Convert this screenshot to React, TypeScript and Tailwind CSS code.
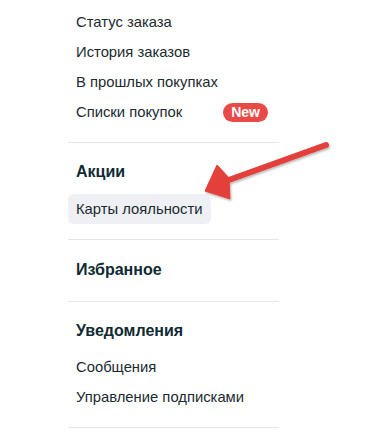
const font = { fontFamily: '"Liberation Sans", Arial, sans-serif' }

function Item({ label, active, badge }: { label: string; active?: boolean; badge?: string }) {
  return (
    <div
      className={`flex items-center h-[30px] px-2 rounded-md text-[14.8px] text-[#1b2a31] ${active ? "bg-[#eef0f3] w-fit" : ""}`}
    >
      <span>{label}</span>
      {badge && (
        <span className="ml-auto mr-[3px] h-[19px] px-[8px] rounded-full bg-[#ea4a47] text-white font-bold text-[14px] leading-[19px]">
          {badge}
        </span>
      )}
    </div>
  )
}

function Heading({ children }: { children: string }) {
  return <div className="flex items-center h-[30px] px-2 text-[16px] font-bold text-[#0f2a33]">{children}</div>
}

export default function App() {
  return (
    <div className="relative w-[366px] h-[432px] bg-white overflow-hidden" style={font}>
      <div className="w-[279px] pl-[68px]">
        <div className="pt-[7px] pb-[15px] border-b border-[#e6e6e6]">
          <Item label="Статус заказа" />
          <Item label="История заказов" />
          <Item label="В прошлых покупках" />
          <Item label="Списки покупок" badge="New" />
        </div>

        <div className="pt-[14px] pb-[15px] border-b border-[#e6e6e6]">
          <Heading>Акции</Heading>
          <div className="mt-[7px]">
            <Item label="Карты лояльности" active />
          </div>
        </div>

        <div className="pt-[15px] pb-[16px] border-b border-[#e6e6e6]">
          <Heading>Избранное</Heading>
        </div>

        <div className="pt-[14px] pb-[15px] border-b border-[#e6e6e6]">
          <Heading>Уведомления</Heading>
          <div className="mt-[6px]">
            <Item label="Сообщения" />
            <Item label="Управление подписками" />
          </div>
        </div>
      </div>

      {/* annotation arrow */}
      <svg className="absolute left-0 top-0 pointer-events-none" width="366" height="432">
        <defs>
          <filter id="sh" x="-20%" y="-20%" width="140%" height="140%">
            <feDropShadow dx="1" dy="1.5" stdDeviation="1.2" floodColor="#000" floodOpacity="0.3" />
          </filter>
        </defs>
        <g filter="url(#sh)" fill="#e3403a" stroke="#e3403a">
          <line x1="226" y1="181" x2="326" y2="145" strokeWidth="6" strokeLinecap="round" />
          <polygon points="205,191 217,165 229,178 230,199" strokeWidth="1" strokeLinejoin="round" />
        </g>
      </svg>
    </div>
  )
}
